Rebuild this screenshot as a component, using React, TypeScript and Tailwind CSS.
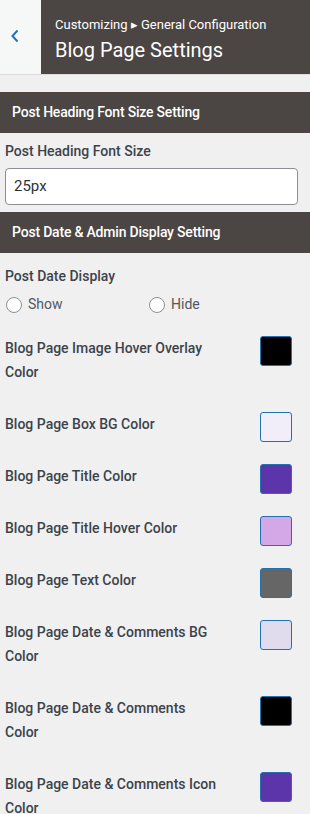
import React from "react";

const rows: { label: string; color: string }[] = [
  { label: "Blog Page Image Hover Overlay Color", color: "bg-[#000000]" },
  { label: "Blog Page Box BG Color", color: "bg-[#f1eef9]" },
  { label: "Blog Page Title Color", color: "bg-[#5b35a9]" },
  { label: "Blog Page Title Hover Color", color: "bg-[#d4a7e7]" },
  { label: "Blog Page Text Color", color: "bg-[#666666]" },
  { label: "Blog Page Date & Comments BG Color", color: "bg-[#e1dced]" },
  { label: "Blog Page Date & Comments Color", color: "bg-[#000000]" },
  { label: "Blog Page Date & Comments Icon Color", color: "bg-[#5b35a9]" },
];

function SectionHead({ children }: { children: React.ReactNode }) {
  return (
    <div className="h-[41px] bg-[#4b4543] flex items-center px-3 text-white text-[14px] font-medium tracking-[-0.2px]">
      {children}
    </div>
  );
}

function Radio({ label }: { label: string }) {
  return (
    <div className="flex items-center gap-[6px] w-[143px]">
      <span className="w-4 h-4 rounded-full border border-[#8c8f94] bg-white" />
      <span className="text-[14px] text-[#50575e]">{label}</span>
    </div>
  );
}

export default function App() {
  return (
    <div
      className="w-[310px] h-[814px] overflow-hidden bg-[#f0f0f1] text-[#3c434a]"
      style={{ fontFamily: "Roboto, 'Liberation Sans', sans-serif" }}
    >
      <div className="flex h-[75px] border-b border-[#dcdcde]">
        <div className="w-[41px] bg-[#f6f7f7] flex items-center pl-[10px] pb-[2px]">
          <svg width="10" height="14" viewBox="0 0 10 14">
            <path d="M7.5 1.5 L2.5 7 L7.5 12.5" fill="none" stroke="#2271b1" strokeWidth="2" />
          </svg>
        </div>
        <div className="flex-1 bg-[#4b4543] pl-[14px] pt-[16px] text-white">
          <div className="text-[13px] leading-[18px]">Customizing ▸ General Configuration</div>
          <div className="text-[20px] leading-[28px] mt-[2px]">Blog Page Settings</div>
        </div>
      </div>
      <div className="h-[17px]" />
      <SectionHead>Post Heading Font Size Setting</SectionHead>
      <div className="px-[5px] pt-[8px]">
        <div className="text-[14px] font-medium leading-[20px]">Post Heading Font Size</div>
        <div className="mt-[7px] h-[37px] bg-white border border-[#8c8f94] rounded-[4px] flex items-center px-[8px] text-[15px] text-[#2c3338] w-[293px]">
          25px
        </div>
      </div>
      <div className="h-[7px]" />
      <SectionHead>Post Date &amp; Admin Display Setting</SectionHead>
      <div className="px-[5px] pt-[13px]">
        <div className="text-[14px] font-medium leading-[20px]">Post Date Display</div>
        <div className="flex mt-[8px] pl-[1px]">
          <Radio label="Show" />
          <Radio label="Hide" />
        </div>
      </div>
      <div className="px-[5px] pt-[21px]">
        {rows.map((r) => (
          <div key={r.label} className="mb-[28px]">
            <div className={`float-right w-[32px] h-[30px] rounded-[3px] border border-[#2271b1] mr-[13px] ${r.color}`} />
            <div className="w-[217px] text-[14px] font-medium leading-[24px]">{r.label}</div>
          </div>
        ))}
      </div>
    </div>
  );
}
